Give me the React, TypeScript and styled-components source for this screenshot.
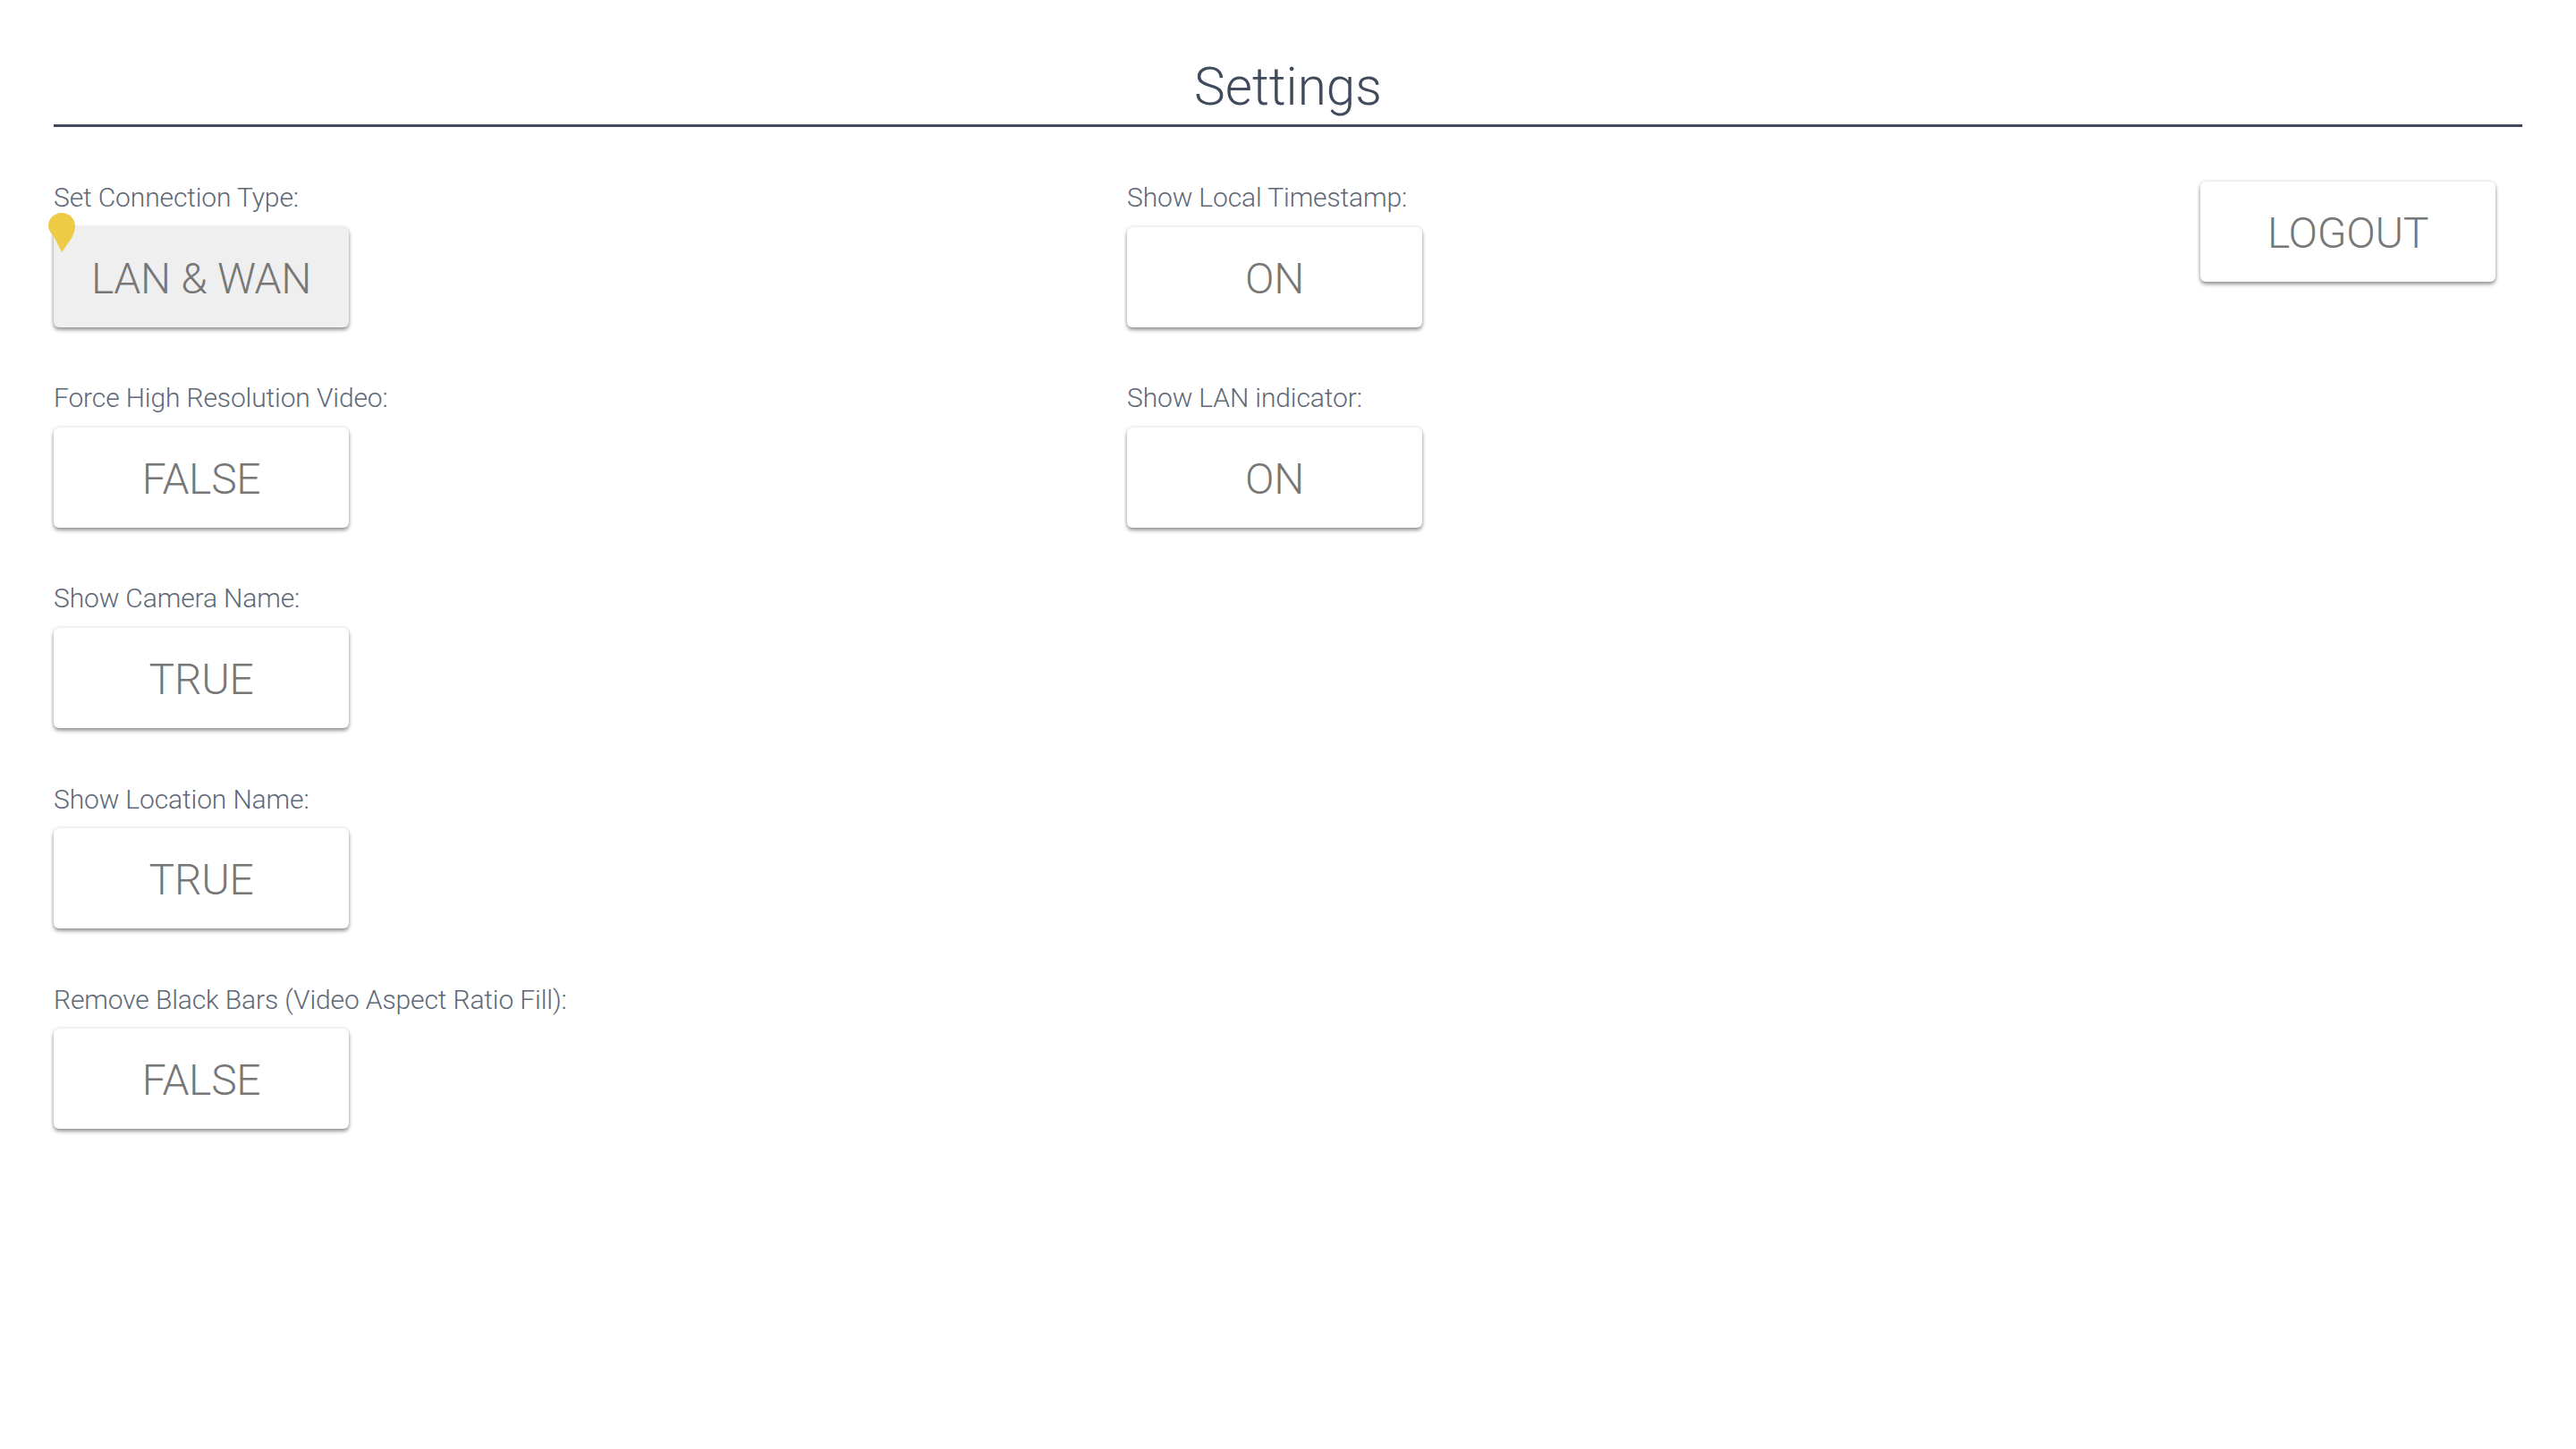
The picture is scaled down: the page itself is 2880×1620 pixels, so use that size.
import React, { FC } from "react";
import styled, { createGlobalStyle } from "styled-components";

const GlobalStyle = createGlobalStyle`
    html, body {
        margin: 0;
        padding: 0;
        background: #ffffff;
        font-family: Roboto, "Liberation Sans", sans-serif;
    }
`;

const StyledPage = styled.div`
    width: 2880px;
    height: 1620px;
    box-sizing: border-box;
    padding: 0 60px;
    overflow: hidden;
`;

const StyledHeader = styled.h1`
    height: 142px;
    box-sizing: border-box;
    margin: 0;
    padding-top: 62px;
    border-bottom: 3px solid #3f4b5d;
    text-align: center;
    font-size: 58.5px;
    line-height: 70px;
    font-weight: 300;
    color: #3f4b5d;
`;

const StyledColumns = styled.div`
    display: grid;
    grid-template-columns: 1200px 1fr auto;
    padding-top: 58px;
`;

const StyledColumn = styled.div`
    display: flex;
    flex-direction: column;
    gap: 58.7px;
`;

const StyledField = styled.div`
    display: flex;
    flex-direction: column;
    align-items: flex-start;
    gap: 11.5px;
`;

const StyledLabel = styled.label`
    font-size: 30px;
    line-height: 42px;
    font-weight: 300;
    letter-spacing: -0.13px;
    color: #5e6877;
    white-space: nowrap;
`;

const StyledButton = styled.button<{ $active?: boolean }>`
    position: relative;
    width: 330px;
    height: 112px;
    padding: 3px 0 0;
    border: none;
    border-radius: 6px;
    background: ${props => props.$active ? "#efefef" : "#ffffff"};
    box-shadow: 0 3px 4px rgba(0, 0, 0, 0.38), 0 0 4px rgba(0, 0, 0, 0.14);
    font-family: inherit;
    font-size: 48px;
    font-weight: 300;
    letter-spacing: -0.3px;
    color: #777777;
`;

const StyledLogoutArea = styled.div`
    padding: 2.5px 30px 0 0;
`;

const StyledPin = styled.svg`
    position: absolute;
    left: -6px;
    top: -15.5px;
    width: 30px;
    height: 44px;
`;

interface IField {
    label: string;
    value: string;
}

const leftFields: IField[] = [
    { label: "Set Connection Type:", value: "LAN & WAN" },
    { label: "Force High Resolution Video:", value: "FALSE" },
    { label: "Show Camera Name:", value: "TRUE" },
    { label: "Show Location Name:", value: "TRUE" },
    { label: "Remove Black Bars (Video Aspect Ratio Fill):", value: "FALSE" },
];

const rightFields: IField[] = [
    { label: "Show Local Timestamp:", value: "ON" },
    { label: "Show LAN indicator:", value: "ON" },
];

const App: FC = () => {
    return (
        <StyledPage>
            <GlobalStyle />
            <StyledHeader>Settings</StyledHeader>
            <StyledColumns>
                <StyledColumn>
                    {leftFields.map((f, id) => (
                        <StyledField key={f.label}>
                            <StyledLabel>{f.label}</StyledLabel>
                            <StyledButton $active={id === 0}>
                                {id === 0 && (
                                    <StyledPin viewBox="0 0 30 44">
                                        <path d="M15 0C23.5 0 30 6.5 30 15C30 19 28.5 23 26.5 27.5L15 44L7 28C3 22 0 19 0 15C0 6.5 6.5 0 15 0Z" fill="#edcb45" />
                                    </StyledPin>
                                )}
                                {f.value}
                            </StyledButton>
                        </StyledField>
                    ))}
                </StyledColumn>
                <StyledColumn>
                    {rightFields.map(f => (
                        <StyledField key={f.label}>
                            <StyledLabel>{f.label}</StyledLabel>
                            <StyledButton>{f.value}</StyledButton>
                        </StyledField>
                    ))}
                </StyledColumn>
                <StyledLogoutArea>
                    <StyledButton>LOGOUT</StyledButton>
                </StyledLogoutArea>
            </StyledColumns>
        </StyledPage>
    );
};

export default App;
